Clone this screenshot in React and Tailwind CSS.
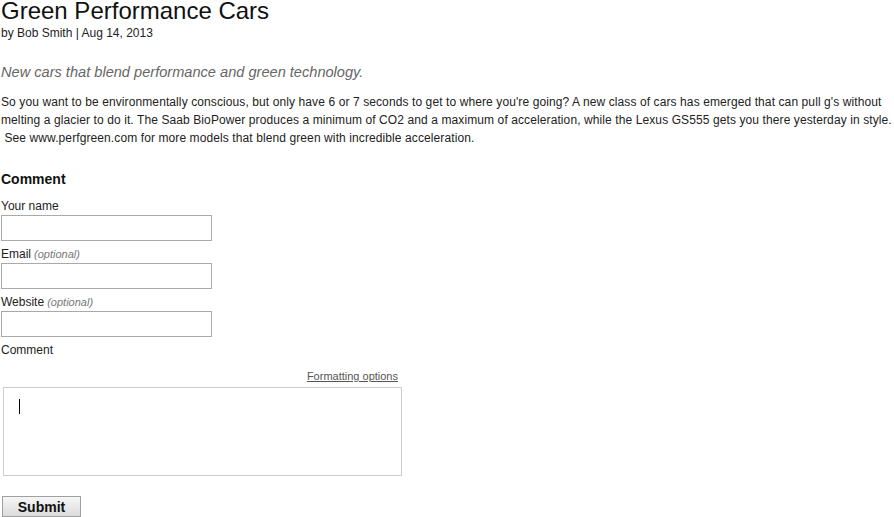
export default function App() {
  const fields = [
    { label: "Your name", optional: false },
    { label: "Email", optional: true },
    { label: "Website", optional: true },
  ];

  return (
    <div className="min-h-screen bg-white text-[#222] font-['Liberation_Sans',Arial,sans-serif] pl-[1px]">
      <h1 className="text-[24px] leading-[22px] font-normal text-[#111]">Green Performance Cars</h1>
      <div className="mt-[3px] text-[12px] leading-[16px]">by Bob Smith | Aug 14, 2013</div>

      <p className="mt-[22px] text-[14.6px] leading-[18px] italic text-[#666]">
        New cars that blend performance and green technology.
      </p>

      <p className="mt-[12px] text-[12px] leading-[18px] tracking-[0.1px]">
        So you want to be environmentally conscious, but only have 6 or 7 seconds to get to where you're going? A new
        class of cars has emerged that can pull g's without melting a glacier to do it. The Saab BioPower produces a
        minimum of CO2 and a maximum of acceleration, while the Lexus GS555 gets you there yesterday in style.{" "}
        {"\u00a0"}See www.perfgreen.com for more models that blend green with incredible acceleration.
      </p>

      <form className="mt-[23px]" onSubmit={(e) => e.preventDefault()}>
        <h3 className="text-[14px] leading-[18px] font-bold text-[#111]">Comment</h3>

        <div className="mt-[10px] flex flex-col">
          {fields.map((f, i) => (
            <div key={f.label} className={i > 0 ? "mt-[5px]" : ""}>
              <label className="block h-[16px] overflow-visible text-[12px] leading-[16px]">
                {f.label}
                {f.optional && <em className="text-[11px] leading-[11px] text-[#777]"> (optional)</em>}
              </label>
              <input
                type="text"
                className="mt-[1px] block w-[211px] h-[26px] border border-[#a9a9a9] bg-white px-1 text-[12px] outline-none"
              />
            </div>
          ))}
        </div>

        <label className="mt-[5px] block h-[16px] text-[12px] leading-[16px]">Comment</label>

        <div className="w-[397px] mt-[11px] text-right text-[11px] leading-[14px]">
          <a href="#" className="text-[#555] underline">Formatting options</a>
        </div>

        <div className="relative mt-[4px] ml-[2px] w-[399px] h-[89px]">
          <textarea className="w-full h-full border border-[#cccccc] bg-white resize-none outline-none p-2 text-[12px]" />
          <span className="absolute left-[16px] top-[12px] w-px h-[15px] bg-black" />
        </div>

        <button
          type="submit"
          className="mt-[20px] ml-[1px] w-[79px] h-[21px] border border-[#a0a0a0] bg-gradient-to-b from-[#f6f6f6] to-[#dcdcdc] text-[14px] leading-[18px] font-bold text-[#111]"
        >
          Submit
        </button>
      </form>
    </div>
  );
}
